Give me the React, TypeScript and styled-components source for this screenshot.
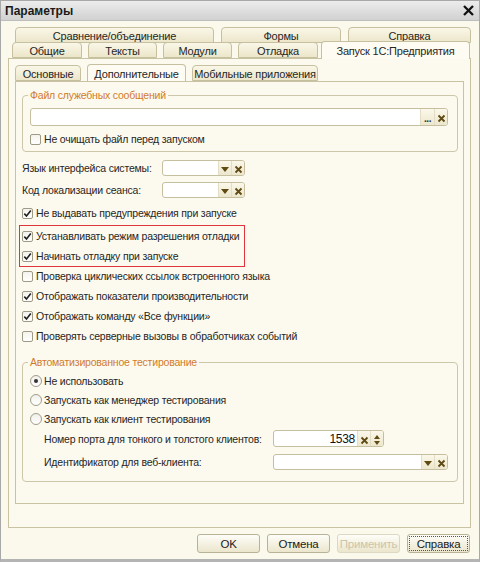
import React from "react";
import styled, { createGlobalStyle } from "styled-components";

const Global = createGlobalStyle`
    html, body { margin: 0; padding: 0; background: #ffffff; }
    * { box-sizing: border-box; }
`;

const Window = styled.div`
    width: 480px;
    height: 562px;
    background: #fbf9ec;
    border: 1px solid #a8a8a8;
    border-bottom: 3px solid #b4b4b4;
    display: flex;
    flex-direction: column;
    font: 10.5px "Liberation Sans", Arial, sans-serif;
    letter-spacing: -0.2px;
    color: #262626;
`;

const TitleBar = styled.div`
    height: 20px;
    flex: none;
    display: flex;
    align-items: center;
    justify-content: space-between;
    padding: 0 5px 0 4px;
    background: linear-gradient(#ececec, #d1d1d1);
    border-bottom: 1px solid #bdbdbd;
    font-weight: bold;
    font-size: 12px;
    letter-spacing: 0;
    color: #1a1a1a;
`;

const Body = styled.div`
    flex: 1;
    display: flex;
    flex-direction: column;
    padding: 6px 8px 0 7px;
`;

const TabRow = styled.div<{ $indent: number; $over?: boolean }>`
    display: flex;
    align-items: flex-end;
    height: 16px;
    padding-left: ${(p) => p.$indent}px;
    margin-top: ${(p) => (p.$over ? -1 : 0)}px;
    position: relative;
    z-index: ${(p) => (p.$over ? 2 : 1)};
`;

const Tab = styled.div<{ $w: number; $gap?: number; $active?: boolean }>`
    width: ${(p) => p.$w}px;
    margin-left: ${(p) => p.$gap ?? 0}px;
    height: ${(p) => (p.$active ? 18 : 16)}px;
    margin-bottom: ${(p) => (p.$active ? -1 : 0)}px;
    border: 1px solid #c6c0a0;
    border-bottom: ${(p) => (p.$active ? "none" : "1px solid #c6c0a0")};
    border-radius: 4px 4px 0 0;
    background: ${(p) =>
        p.$active ? "#fdfbf2" : "linear-gradient(#faf7e8, #ece6ca)"};
    display: flex;
    align-items: center;
    justify-content: center;
    padding-top: ${(p) => (p.$active ? 0 : 1)}px;
    font-size: 11px;
    position: relative;
    z-index: ${(p) => (p.$active ? 3 : 1)};
    white-space: nowrap;
`;

const Panel = styled.div<{ $h: number; $pad: string }>`
    height: ${(p) => p.$h}px;
    border: 1px solid #c9c3a4;
    background: #fcfaef;
    padding: ${(p) => p.$pad};
    display: flex;
    flex-direction: column;
    position: relative;
    z-index: 1;
`;

const Group = styled.fieldset<{ $top: number; $bottom: number }>`
    margin: ${(p) => p.$top}px 0 0 0;
    padding: 0 9px ${(p) => p.$bottom}px 7px;
    border: 1px solid #cdc7a9;
    border-radius: 4px;
    min-width: 0;
`;

const Legend = styled.legend`
    color: #d27a2c;
    padding: 0 2px;
    margin-left: -2px;
    line-height: 13px;
`;

const Field = styled.div<{ $w?: number; $h?: number; $top?: number }>`
    display: flex;
    width: ${(p) => (p.$w ? `${p.$w}px` : "auto")};
    height: ${(p) => p.$h ?? 17}px;
    margin-top: ${(p) => p.$top ?? 0}px;
    border: 1px solid #c5bf9f;
    border-radius: 3px;
    background: #ffffff;
    overflow: hidden;
    flex: none;
`;

const FieldText = styled.div<{ $right?: boolean }>`
    flex: 1;
    display: flex;
    align-items: center;
    justify-content: ${(p) => (p.$right ? "flex-end" : "flex-start")};
    padding: 0 2px;
    font-size: 12px;
    letter-spacing: -0.3px;
    color: #111;
`;

const FieldButton = styled.div<{ $w?: number }>`
    width: ${(p) => p.$w ?? 13}px;
    flex: none;
    display: flex;
    flex-direction: column;
    align-items: center;
    justify-content: center;
    gap: 2px;
    background: linear-gradient(#fbf8ea, #ece7cd);
    border-left: 1px solid #e2ddc4;
    color: #333;
    font-weight: bold;
    font-size: 10px;
    letter-spacing: -0.5px;
    padding-top: 3px;
`;

const Row = styled.div<{ $h?: number; $top?: number; $indent?: number }>`
    display: flex;
    align-items: center;
    height: ${(p) => p.$h ?? 20}px;
    margin-top: ${(p) => p.$top ?? 0}px;
    padding-left: ${(p) => p.$indent ?? 0}px;
    white-space: nowrap;
`;

const Label = styled.span<{ $w: number }>`
    width: ${(p) => p.$w}px;
    flex: none;
`;

const Box = styled.span`
    width: 11px;
    height: 11px;
    flex: none;
    margin-right: 3px;
    border: 1px solid #9d9a86;
    border-radius: 2px;
    background: linear-gradient(#f4f3ee, #ffffff);
    display: flex;
    align-items: center;
    justify-content: center;
`;

const Round = styled.span`
    width: 12px;
    height: 12px;
    flex: none;
    margin-right: 2px;
    border: 1px solid #a09d8a;
    border-radius: 50%;
    background: linear-gradient(#f1f0ea, #ffffff);
    display: flex;
    align-items: center;
    justify-content: center;
`;

const Dot = styled.span`
    width: 4px;
    height: 4px;
    border-radius: 50%;
    background: #333;
`;

const Highlight = styled.div`
    align-self: flex-start;
    margin: 2px 0 -1px -3px;
    padding: 0 5px 0 2px;
    border: 1.5px solid #e0353b;
`;

const Footer = styled.div`
    display: flex;
    justify-content: flex-end;
    gap: 7px;
    margin-top: 6px;
    padding-right: 1px;
`;

const Button = styled.div<{ $disabled?: boolean; $focus?: boolean }>`
    width: 63px;
    height: 19px;
    border: 1px solid ${(p) => (p.$disabled ? "#ddd8c2" : "#b8b296")};
    border-radius: 3px;
    background: linear-gradient(#fefdf8, #ebe6cd);
    display: flex;
    align-items: center;
    justify-content: center;
    font-size: 11.5px;
    color: ${(p) => (p.$disabled ? "#cbc5aa" : "#1a1a1a")};
    outline: ${(p) => (p.$focus ? "1px dotted #555" : "none")};
    outline-offset: -3px;
`;

const Check = () => (
    <svg width="9" height="9" viewBox="0 0 9 9">
        <path d="M1.3 4.6 L3.5 7 L7.8 1.6" fill="none" stroke="#222" strokeWidth="1.6" />
    </svg>
);

const Cross = () => (
    <svg width="9" height="9" viewBox="0 0 9 9">
        <path d="M1.5 1.5 L7.5 7.5 M7.5 1.5 L1.5 7.5" stroke="#5e4a12" strokeWidth="1.8" />
    </svg>
);

const Down = () => (
    <svg width="8" height="5" viewBox="0 0 8 5">
        <path d="M0 0 H8 L4 5 Z" fill="#5e4a12" />
    </svg>
);

const Up = () => (
    <svg width="6" height="4" viewBox="0 0 6 4">
        <path d="M0 4 H6 L3 0 Z" fill="#5e4a12" />
    </svg>
);

const SmallDown = () => (
    <svg width="6" height="4" viewBox="0 0 6 4">
        <path d="M0 0 H6 L3 4 Z" fill="#5e4a12" />
    </svg>
);

const CheckRow = ({ on, text }: { on?: boolean; text: string }) => (
    <Row>
        <Box>{on && <Check />}</Box>
        {text}
    </Row>
);

const Radio = ({ on, text }: { on?: boolean; text: string }) => (
    <Row $h={19}>
        <Round>{on && <Dot />}</Round>
        {text}
    </Row>
);

const Combo = ({ w }: { w: number }) => (
    <Field $w={w} $h={16}>
        <FieldText />
        <FieldButton>
            <Down />
        </FieldButton>
        <FieldButton>
            <Cross />
        </FieldButton>
    </Field>
);

export default function App() {
    return (
        <Window>
            <Global />
            <TitleBar>
                <span>Параметры</span>
                <svg width="11" height="11" viewBox="0 0 11 11">
                    <path d="M1 1 L10 10 M10 1 L1 10" stroke="#111" strokeWidth="2.3" />
                </svg>
            </TitleBar>
            <Body>
                <TabRow $indent={7}>
                    <Tab $w={199}>Сравнение/объединение</Tab>
                    <Tab $w={120} $gap={7}>Формы</Tab>
                    <Tab $w={123} $gap={7}>Справка</Tab>
                </TabRow>
                <TabRow $indent={4} $over>
                    <Tab $w={70}>Общие</Tab>
                    <Tab $w={69} $gap={6}>Тексты</Tab>
                    <Tab $w={69} $gap={6}>Модули</Tab>
                    <Tab $w={80} $gap={6}>Отладка</Tab>
                    <Tab $w={149} $gap={3} $active>Запуск 1С:Предприятия</Tab>
                </TabRow>
                <Panel $h={470} $pad="6px 6px 0 6px">
                    <TabRow $indent={0}>
                        <Tab $w={66}>Основные</Tab>
                        <Tab $w={99} $gap={6} $active>Дополнительные</Tab>
                        <Tab $w={126} $gap={6}>Мобильные приложения</Tab>
                    </TabRow>
                    <Panel $h={423} $pad="0 5px 0 6px">
                        <Group $top={7} $bottom={2}>
                            <Legend>Файл служебных сообщений</Legend>
                            <Field $h={18} $top={6}>
                                <FieldText />
                                <FieldButton $w={14}>...</FieldButton>
                                <FieldButton>
                                    <Cross />
                                </FieldButton>
                            </Field>
                            <Row $top={3}>
                                <Box />
                                Не очищать файл перед запуском
                            </Row>
                        </Group>
                        <Row $h={16} $top={8}>
                            <Label $w={140}>Язык интерфейса системы:</Label>
                            <Combo w={83} />
                        </Row>
                        <Row $h={16} $top={6}>
                            <Label $w={140}>Код локализации сеанса:</Label>
                            <Combo w={83} />
                        </Row>
                        <Row $top={5}>
                            <Box>
                                <Check />
                            </Box>
                            Не выдавать предупреждения при запуске
                        </Row>
                        <Highlight>
                            <CheckRow on text="Устанавливать режим разрешения отладки" />
                            <CheckRow on text="Начинать отладку при запуске" />
                        </Highlight>
                        <CheckRow text="Проверка циклических ссылок встроенного языка" />
                        <CheckRow on text="Отображать показатели производительности" />
                        <CheckRow on text="Отображать команду «Все функции»" />
                        <CheckRow text="Проверять серверные вызовы в обработчиках событий" />
                        <Group $top={10} $bottom={11}>
                            <Legend>Автоматизированное тестирование</Legend>
                            <Row $h={2} />
                            <Radio on text="Не использовать" />
                            <Radio text="Запускать как менеджер тестирования" />
                            <Radio text="Запускать как клиент тестирования" />
                            <Row $h={17} $top={2} $indent={14}>
                                <Label $w={229}>Номер порта для тонкого и толстого клиентов:</Label>
                                <Field $w={111}>
                                    <FieldText $right>1538</FieldText>
                                    <FieldButton>
                                        <Cross />
                                    </FieldButton>
                                    <FieldButton>
                                        <Up />
                                        <SmallDown />
                                    </FieldButton>
                                </Field>
                            </Row>
                            <Row $h={17} $top={6} $indent={14}>
                                <Label $w={229}>Идентификатор для веб-клиента:</Label>
                                <Combo w={175} />
                            </Row>
                        </Group>
                    </Panel>
                </Panel>
                <Footer>
                    <Button>OK</Button>
                    <Button>Отмена</Button>
                    <Button $disabled>Применить</Button>
                    <Button $focus>Справка</Button>
                </Footer>
            </Body>
        </Window>
    );
}
